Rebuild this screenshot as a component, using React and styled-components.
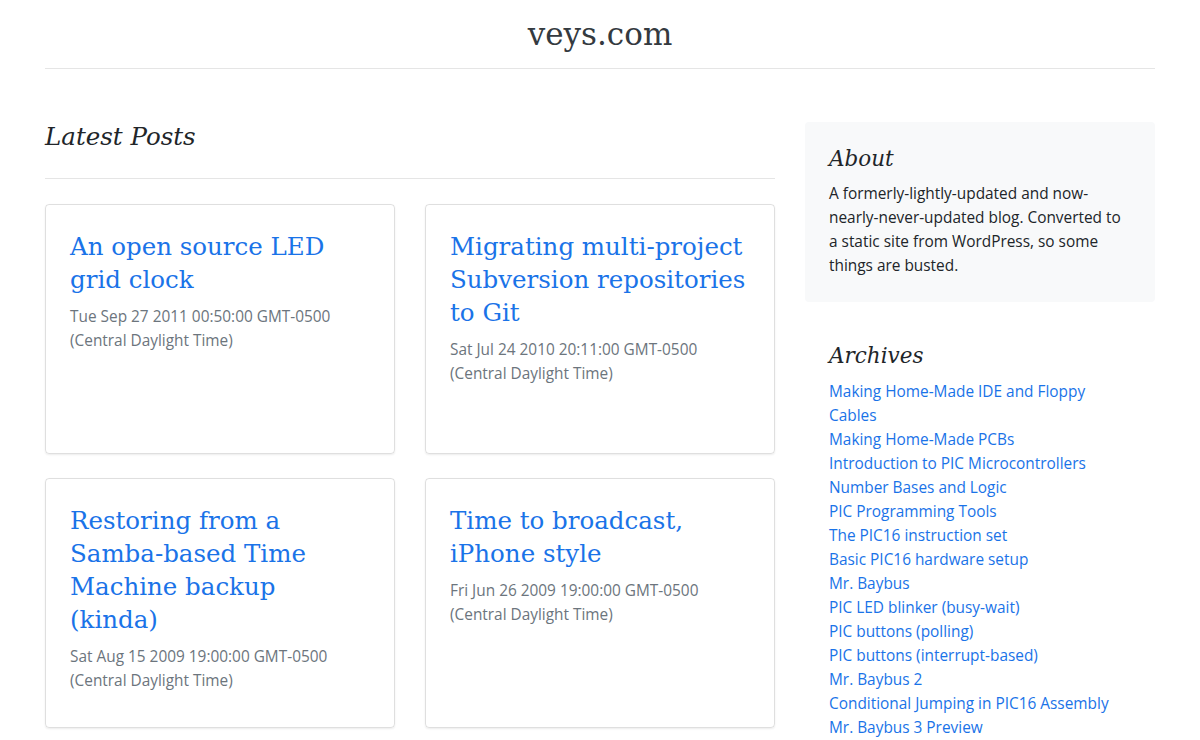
import React from 'react';
import styled, { createGlobalStyle } from 'styled-components';

const GlobalStyle = createGlobalStyle`
  body {
    margin: 0;
    background: #fff;
    color: #212529;
    font-family: "Open Sans", "Noto Sans", sans-serif;
    font-size: 15.4px;
  }
`;

const serif = `"DejaVu Serif", "Liberation Serif", Georgia, serif`;

const Container = styled.div`
  width: 1110px;
  margin: 0 auto;
`;

const Header = styled.header`
  height: 68px;
  display: flex;
  align-items: center;
  justify-content: center;
  border-bottom: 1px solid #e5e5e5;
`;

const Brand = styled.a`
  font-family: ${serif};
  font-size: 31px;
  color: #343a40;
  text-decoration: none;
`;

const Row = styled.div`
  display: grid;
  grid-template-columns: 730px 350px;
  gap: 30px;
  padding-top: 53px;
`;

const SectionTitle = styled.h3`
  margin: 0;
  padding-bottom: 26px;
  border-bottom: 1px solid #e5e5e5;
  font-family: ${serif};
  font-style: italic;
  font-weight: normal;
  font-size: 24.5px;
  line-height: 30px;
`;

const CardGrid = styled.div`
  display: grid;
  grid-template-columns: 1fr 1fr;
  column-gap: 30px;
  row-gap: 24px;
  margin-top: 25px;
`;

const Card = styled.div`
  height: 250px;
  box-sizing: border-box;
  border: 1px solid rgba(0, 0, 0, 0.125);
  border-radius: 4px;
  box-shadow: 0 1px 2px rgba(0, 0, 0, 0.075);
  padding: 25px 26px 24px 24px;
`;

const CardTitle = styled.a`
  display: block;
  font-family: ${serif};
  font-size: 24.5px;
  line-height: 33px;
  color: #1a73e8;
  text-decoration: none;
  margin-bottom: 9px;
`;

const PostDate = styled.div`
  color: #6c757d;
  line-height: 24px;
`;

const Module = styled.div`
  padding: 24px;
  border-radius: 4px;
  background: ${p => (p.$muted ? '#f8f9fa' : 'transparent')};
  margin-top: ${p => (p.$muted ? '0' : '17px')};
`;

const ModuleTitle = styled.h4`
  margin: 0 0 ${p => (p.$loose ? '11px' : '10px')};
  font-family: ${serif};
  font-style: italic;
  font-weight: normal;
  font-size: 21.5px;
  line-height: 26px;
`;

const Text = styled.p`
  margin: 0;
  line-height: 24px;
`;

const LinkList = styled.ul`
  list-style: none;
  margin: 0;
  padding: 0;
  line-height: 24px;

  a {
    color: #1a73e8;
    text-decoration: none;
  }
`;

const posts = [
  { title: 'An open source LED grid clock', date: 'Tue Sep 27 2011 00:50:00 GMT-0500 (Central Daylight Time)' },
  { title: 'Migrating multi-project Subversion repositories to Git', date: 'Sat Jul 24 2010 20:11:00 GMT-0500 (Central Daylight Time)' },
  { title: 'Restoring from a Samba-based Time Machine backup (kinda)', date: 'Sat Aug 15 2009 19:00:00 GMT-0500 (Central Daylight Time)' },
  { title: 'Time to broadcast, iPhone style', date: 'Fri Jun 26 2009 19:00:00 GMT-0500 (Central Daylight Time)' },
];

const archives = [
  'Making Home-Made IDE and Floppy Cables',
  'Making Home-Made PCBs',
  'Introduction to PIC Microcontrollers',
  'Number Bases and Logic',
  'PIC Programming Tools',
  'The PIC16 instruction set',
  'Basic PIC16 hardware setup',
  'Mr. Baybus',
  'PIC LED blinker (busy-wait)',
  'PIC buttons (polling)',
  'PIC buttons (interrupt-based)',
  'Mr. Baybus 2',
  'Conditional Jumping in PIC16 Assembly',
  'Mr. Baybus 3 Preview',
];

export default function App() {
  return (
    <>
      <GlobalStyle />
      <Container>
        <Header>
          <Brand href="#">veys.com</Brand>
        </Header>
        <Row>
          <main>
            <SectionTitle>Latest Posts</SectionTitle>
            <CardGrid>
              {posts.map(post => (
                <Card key={post.title}>
                  <CardTitle href="#">{post.title}</CardTitle>
                  <PostDate>{post.date}</PostDate>
                </Card>
              ))}
            </CardGrid>
          </main>
          <aside>
            <Module $muted>
              <ModuleTitle>About</ModuleTitle>
              <Text>
                A formerly-lightly-updated and now-nearly-never-updated blog. Converted to a static site from WordPress, so some things are busted.
              </Text>
            </Module>
            <Module>
              <ModuleTitle $loose>Archives</ModuleTitle>
              <LinkList>
                {archives.map(a => (
                  <li key={a}><a href="#">{a}</a></li>
                ))}
              </LinkList>
            </Module>
          </aside>
        </Row>
      </Container>
    </>
  );
}
